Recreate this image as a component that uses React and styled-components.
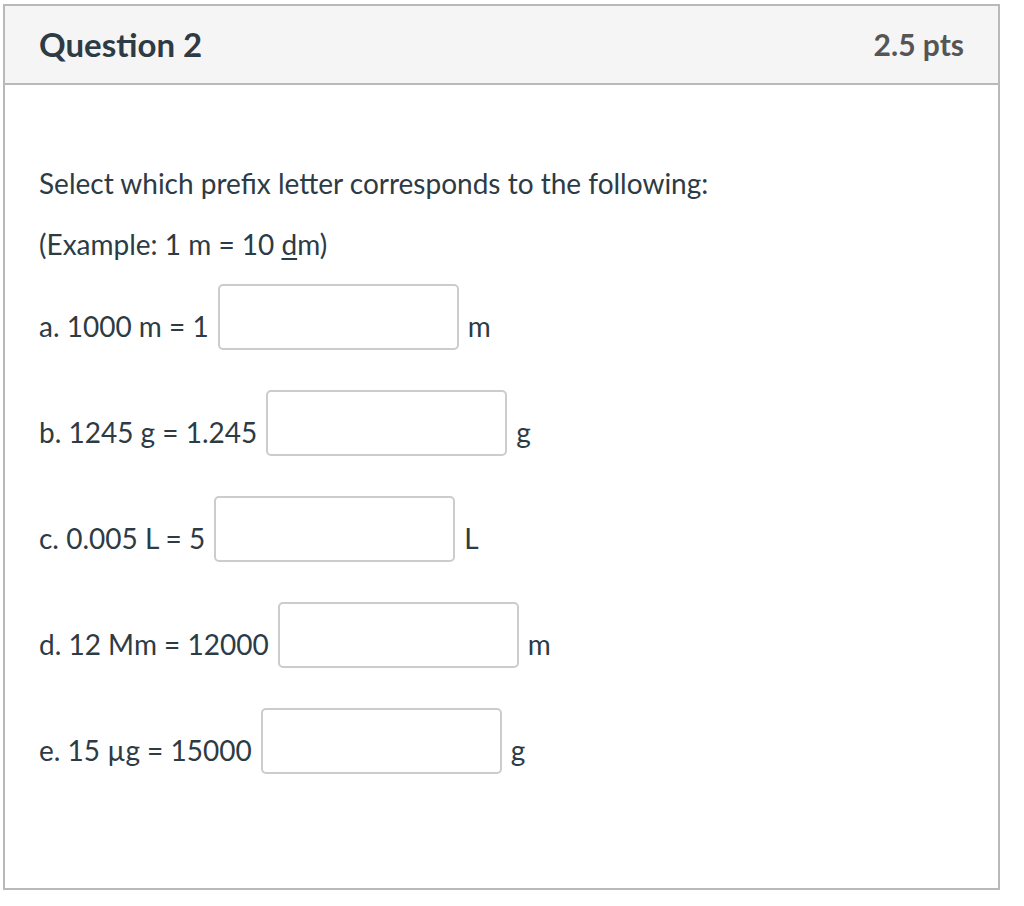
import React from "react";
import styled, { createGlobalStyle } from "styled-components";

const GlobalStyle = createGlobalStyle`
  html, body {
    margin: 0;
    padding: 0;
    background: #ffffff;
  }
  body {
    font-family: Lato, "Liberation Sans", sans-serif;
    color: #2d3b45;
  }
`;

const Card = styled.div`
  margin: 4px 0 0 3px;
  width: 997px;
  height: 886px;
  box-sizing: border-box;
  border: 2px solid #b9b9b9;
  display: flex;
  flex-direction: column;
`;

const Header = styled.div`
  height: 77px;
  background: #f5f5f5;
  border-bottom: 2px solid #b9b9b9;
  display: flex;
  align-items: center;
  justify-content: space-between;
  padding: 0 34px;
`;

const Title = styled.div`
  font-size: 33px;
  font-weight: 700;
  color: #2d3b45;
  margin-top: -2px;
`;

const Points = styled.div`
  font-size: 30px;
  font-weight: 700;
  color: #555555;
  margin-top: -2px;
`;

const Body = styled.div`
  padding: 80px 34px 0;
  font-size: 28px;
  line-height: 36px;
`;

const Para = styled.p`
  margin: 0 0 ${(p) => p.$gap || 0}px;
`;

const Underline = styled.span`
  text-decoration: underline;
  text-decoration-thickness: 2px;
  text-underline-offset: 3px;
`;

const Rows = styled.div`
  display: flex;
  flex-direction: column;
  gap: 40px;
`;

const Row = styled.div`
  display: flex;
  align-items: flex-end;
  height: 66px;
`;

const Label = styled.span`
  margin-bottom: 6px;
  white-space: pre;
`;

const Input = styled.input`
  box-sizing: border-box;
  width: 241px;
  height: 66px;
  margin: 0 9px 0 9px;
  border: 2px solid #cccccc;
  border-radius: 5px;
  background: #ffffff;
  font: inherit;
  padding: 0 10px;
  outline: none;
`;

const Unit = styled.span`
  margin-bottom: 6px;
`;

const ITEMS = [
  { label: "a. 1000 m = 1", unit: "m" },
  { label: "b. 1245 g = 1.245", unit: "g" },
  { label: "c. 0.005 L = 5", unit: "L" },
  { label: "d. 12 Mm = 12000", unit: "m" },
  { label: "e. 15 \u00b5g = 15000", unit: "g" },
];

const App = () => {
  return (
    <>
      <GlobalStyle />
      <Card>
        <Header>
          <Title>Question 2</Title>
          <Points>2.5 pts</Points>
        </Header>
        <Body>
          <Para $gap={25}>Select which prefix letter corresponds to the following:</Para>
          <Para $gap={22}>
            (Example: 1 m = 10 <Underline>d</Underline>m)
          </Para>
          <Rows>
            {ITEMS.map((item) => (
              <Row key={item.label}>
                <Label>{item.label}</Label>
                <Input type="text" />
                <Unit>{item.unit}</Unit>
              </Row>
            ))}
          </Rows>
        </Body>
      </Card>
    </>
  );
};

export default App;
